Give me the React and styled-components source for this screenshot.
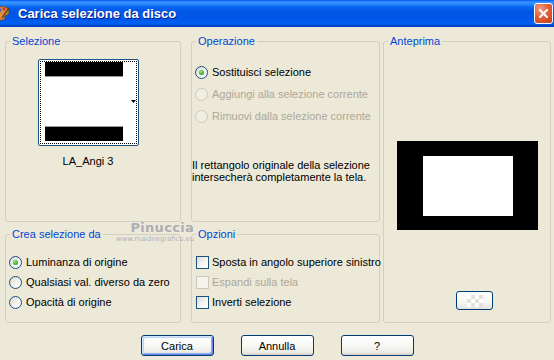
import React from 'react';
import styled, { createGlobalStyle } from 'styled-components';

const FONT = `"Liberation Sans", Arial, sans-serif`;

const Global = createGlobalStyle`
  html, body { margin: 0; padding: 0; background: #ECE9D8; }
  body { width: 554px; height: 360px; overflow: hidden; }
`;

const Window = styled.div`
  position: relative;
  width: 554px;
  height: 360px;
  background: #ECE9D8;
  font-family: ${FONT};
  font-size: 11px;
  color: #000;
  overflow: hidden;
  display: flex;
  flex-direction: column;
`;

const TitleBar = styled.div`
  height: 27px;
  flex: none;
  display: flex;
  align-items: center;
  background: linear-gradient(180deg, #0058EE 0px, #3A93FF 2px, #288EFF 4px, #0A63F0 7px, #0055E5 12px, #0058EA 20px, #0062F4 23px, #0050DC 25px, #003BB0 27px);
`;

const TitleIcon = styled.svg`
  flex: none;
  margin-left: -4px;
  margin-top: -2px;
`;

const TitleText = styled.div`
  flex: 1;
  margin-left: 8px;
  font: bold 13px ${FONT};
  color: #fff;
  text-shadow: 1px 1px 0 #0A1C8A;
  white-space: nowrap;
`;

const CloseButton = styled.div`
  flex: none;
  width: 19px;
  height: 21px;
  margin-right: 1px;
  box-sizing: border-box;
  border: 1px solid #fff;
  border-radius: 3px;
  background: radial-gradient(circle at 30% 25%, #F29A7E 0%, #E2603C 45%, #C93B1A 100%);
  display: flex;
  align-items: center;
  justify-content: center;
`;

const Body = styled.div`
  padding-top: 7px;
  display: flex;
  flex-direction: column;
`;

const Panels = styled.div`
  display: flex;
  align-items: flex-start;
  padding-left: 5px;
`;

const Column = styled.div`
  flex: none;
  display: flex;
  flex-direction: column;
  gap: 5px;
  width: ${p => p.$w}px;
  margin-left: ${p => p.$ml || 0}px;
`;

const Group = styled.fieldset`
  box-sizing: border-box;
  margin: 0;
  padding: 0;
  min-width: 0;
  width: 100%;
  height: ${p => p.$h}px;
  border: 1px solid #D0D0BF;
  border-radius: 3px;
`;

const Legend = styled.legend`
  margin-left: 4px;
  padding: 0 2px;
  color: #0046D5;
  font-size: 11px;
  line-height: 14px;
`;

const SelContent = styled.div`
  display: flex;
  flex-direction: column;
  align-items: center;
  padding: 11px 10px 0 0;
`;

const Thumb = styled.div`
  width: 101px;
  height: 87px;
  box-sizing: border-box;
  border: 1px solid #1C5180;
  border-radius: 2px;
  background: #fff;
  outline: 1px dotted #000;
  outline-offset: -3px;
  display: flex;
`;

const ThumbName = styled.div`
  margin-top: 9px;
  line-height: 13px;
`;

const OpContent = styled.div`
  padding-top: 13px;
  display: flex;
  flex-direction: column;
`;

const OptionList = styled.div`
  display: flex;
  flex-direction: column;
  padding-left: ${p => p.$pl}px;
`;

const Option = styled.label`
  display: flex;
  align-items: center;
  gap: ${p => p.$gap || 4}px;
  height: ${p => p.$h}px;
  line-height: 13px;
  white-space: nowrap;
  color: ${p => (p.$disabled ? '#ACA899' : '#000')};
`;

const Radio = styled.span`
  flex: none;
  width: 13px;
  height: 13px;
  box-sizing: border-box;
  border-radius: 50%;
  border: 1px solid ${p => (p.$disabled ? '#CAC8BB' : '#1C5180')};
  background: ${p => (p.$disabled ? '#F1EFE4' : 'linear-gradient(135deg, #DCD9CE 0%, #F4F3EE 55%, #FFFFFF 100%)')};
  display: flex;
  align-items: center;
  justify-content: center;
`;

const RadioDot = styled.span`
  width: 5px;
  height: 5px;
  border-radius: 50%;
  background: radial-gradient(circle at 40% 35%, #8CE57A 0%, #3DB82F 55%, #1E8F1A 100%);
`;

const Check = styled.span`
  flex: none;
  width: 13px;
  height: 13px;
  box-sizing: border-box;
  border: 1px solid ${p => (p.$disabled ? '#CAC8BB' : '#1C5180')};
  background: ${p => (p.$disabled ? '#F5F4EC' : 'linear-gradient(135deg, #DCDCD6 0%, #F5F5F1 55%, #FFFFFF 100%)')};
`;

const Description = styled.div`
  margin-top: 32px;
  line-height: 12px;
  white-space: nowrap;
`;

const BottomContent = styled.div`
  padding-top: 11px;
`;

const PreviewContent = styled.div`
  display: flex;
  flex-direction: column;
  align-items: center;
  padding-top: 93px;
`;

const PreviewButton = styled.div`
  margin-top: 61px;
  margin-left: 15px;
  width: 37px;
  height: 19px;
  box-sizing: border-box;
  border: 1px solid #003C74;
  border-radius: 3px;
  background: linear-gradient(180deg, #FFFFFF 0%, #F6F6F2 60%, #E4E3DC 100%);
  display: flex;
  align-items: center;
  justify-content: center;
`;

const ButtonRow = styled.div`
  margin-top: 12px;
  display: flex;
  justify-content: center;
  gap: 27px;
`;

const Button = styled.button`
  width: 73px;
  height: 21px;
  box-sizing: border-box;
  padding: 0;
  border: 1px solid #003C74;
  border-radius: 3px;
  font: 11px ${FONT};
  color: #000;
  background: linear-gradient(180deg, #FFFFFF 0%, #F7F7F4 55%, #ECEBE6 85%, #D6D0C5 100%);
  box-shadow: ${p => (p.$default
    ? 'inset 1px 1px 0 #CEE7FF, inset -1px -1px 0 #6982EE, inset 2px 2px 0 #BCD4F6, inset -2px -2px 0 #89ADE4'
    : 'none')};
`;

const Watermark = styled.div`
  position: absolute;
  left: 121px;
  top: 221px;
  width: 73px;
  display: flex;
  flex-direction: column;
  align-items: flex-end;
  color: rgba(120, 120, 155, 0.55);
  pointer-events: none;
`;

const WatermarkName = styled.div`
  font: bold 13px "DejaVu Sans", sans-serif;
  letter-spacing: 0.3px;
  line-height: 14px;
  margin-right: 0;
`;

const WatermarkUrl = styled.div`
  font: 6.8px "DejaVu Sans", sans-serif;
  line-height: 9px;
`;

function PaletteIcon() {
  return (
    <TitleIcon width="14" height="16" viewBox="0 0 14 16">
      <path d="M2 3 C6 0 13 2 13 7 C13 10 10 10 9 11 C8 12 10 14 7 15 C2 16 0 12 0 9 C0 6 0 4 2 3 Z" fill="#D98A3A" stroke="#7A4310" strokeWidth="0.8" />
      <circle cx="4" cy="5" r="1.4" fill="#2A5BD8" />
      <circle cx="8" cy="4" r="1.4" fill="#E02A2A" />
      <circle cx="10.5" cy="7" r="1.3" fill="#2FB12F" />
      <circle cx="3" cy="10" r="1.3" fill="#F3E23A" />
      <path d="M6 13 L13 3" stroke="#5A3A1A" strokeWidth="1.3" />
    </TitleIcon>
  );
}

function CloseX() {
  return (
    <svg width="9" height="9" viewBox="0 0 9 9">
      <path d="M1 1 L8 8 M8 1 L1 8" stroke="#fff" strokeWidth="2" strokeLinecap="square" />
    </svg>
  );
}

function SelectionThumb() {
  return (
    <svg width="99" height="85" viewBox="0 0 99 85">
      <rect x="6" y="2" width="78" height="14" fill="#000" />
      <rect x="6" y="16" width="78" height="1" fill="#9A9A9A" />
      <rect x="6" y="66" width="78" height="1" fill="#9A9A9A" />
      <rect x="6" y="67" width="78" height="14" fill="#000" />
      <polygon points="92,40 97,40 94.5,43" fill="#000" />
    </svg>
  );
}

function PreviewImage() {
  return (
    <svg width="141" height="89" viewBox="0 0 141 89">
      <rect x="0" y="0" width="141" height="89" fill="#000" />
      <rect x="26" y="15" width="90" height="60" fill="#fff" />
    </svg>
  );
}

function Checker() {
  const cells = [];
  for (let r = 0; r < 3; r++) {
    for (let c = 0; c < 4; c++) {
      cells.push(
        <rect key={`${r}-${c}`} x={c * 4} y={r * 4} width="4" height="4" fill={(r + c) % 2 ? '#E2E2DA' : '#FFFFFF'} />
      );
    }
  }
  return (
    <svg width="16" height="12" viewBox="0 0 16 12">
      {cells}
    </svg>
  );
}

function RadioOption({ label, checked, disabled, h }) {
  return (
    <Option $h={h} $disabled={disabled}>
      <Radio $disabled={disabled}>{checked && <RadioDot />}</Radio>
      {label}
    </Option>
  );
}

function CheckOption({ label, disabled, h }) {
  return (
    <Option $h={h} $gap={3} $disabled={disabled}>
      <Check $disabled={disabled} />
      {label}
    </Option>
  );
}

export default function App() {
  return (
    <>
      <Global />
      <Window>
        <TitleBar>
          <PaletteIcon />
          <TitleText>Carica selezione da disco</TitleText>
          <CloseButton><CloseX /></CloseButton>
        </TitleBar>
        <Body>
          <Panels>
            <Column $w={176}>
              <Group $h={188}>
                <Legend>Selezione</Legend>
                <SelContent>
                  <Thumb><SelectionThumb /></Thumb>
                  <ThumbName>LA_Angi 3</ThumbName>
                </SelContent>
              </Group>
              <Group $h={96}>
                <Legend>Crea selezione da</Legend>
                <BottomContent>
                  <OptionList $pl={3}>
                    <RadioOption h={20} checked label="Luminanza di origine" />
                    <RadioOption h={20} label="Qualsiasi val. diverso da zero" />
                    <RadioOption h={20} label="Opacità di origine" />
                  </OptionList>
                </BottomContent>
              </Group>
            </Column>
            <Column $w={189} $ml={10}>
              <Group $h={188}>
                <Legend>Operazione</Legend>
                <OpContent>
                  <OptionList $pl={3}>
                    <RadioOption h={22} checked label="Sostituisci selezione" />
                    <RadioOption h={22} disabled label="Aggiungi alla selezione corrente" />
                    <RadioOption h={22} disabled label="Rimuovi dalla selezione corrente" />
                  </OptionList>
                  <Description>
                    Il rettangolo originale della selezione<br />
                    intersecherà completamente la tela.
                  </Description>
                </OpContent>
              </Group>
              <Group $h={96}>
                <Legend>Opzioni</Legend>
                <BottomContent>
                  <OptionList $pl={4}>
                    <CheckOption h={20} label="Sposta in angolo superiore sinistro" />
                    <CheckOption h={20} disabled label="Espandi sulla tela" />
                    <CheckOption h={20} label="Inverti selezione" />
                  </OptionList>
                </BottomContent>
              </Group>
            </Column>
            <Column $w={168} $ml={3}>
              <Group $h={289}>
                <Legend>Anteprima</Legend>
                <PreviewContent>
                  <PreviewImage />
                  <PreviewButton><Checker /></PreviewButton>
                </PreviewContent>
              </Group>
            </Column>
          </Panels>
          <ButtonRow>
            <Button $default>Carica</Button>
            <Button>Annulla</Button>
            <Button>?</Button>
          </ButtonRow>
        </Body>
        <Watermark>
          <WatermarkName>Pinuccia</WatermarkName>
          <WatermarkUrl>www.maidiregrafico.eu</WatermarkUrl>
        </Watermark>
      </Window>
    </>
  );
}
